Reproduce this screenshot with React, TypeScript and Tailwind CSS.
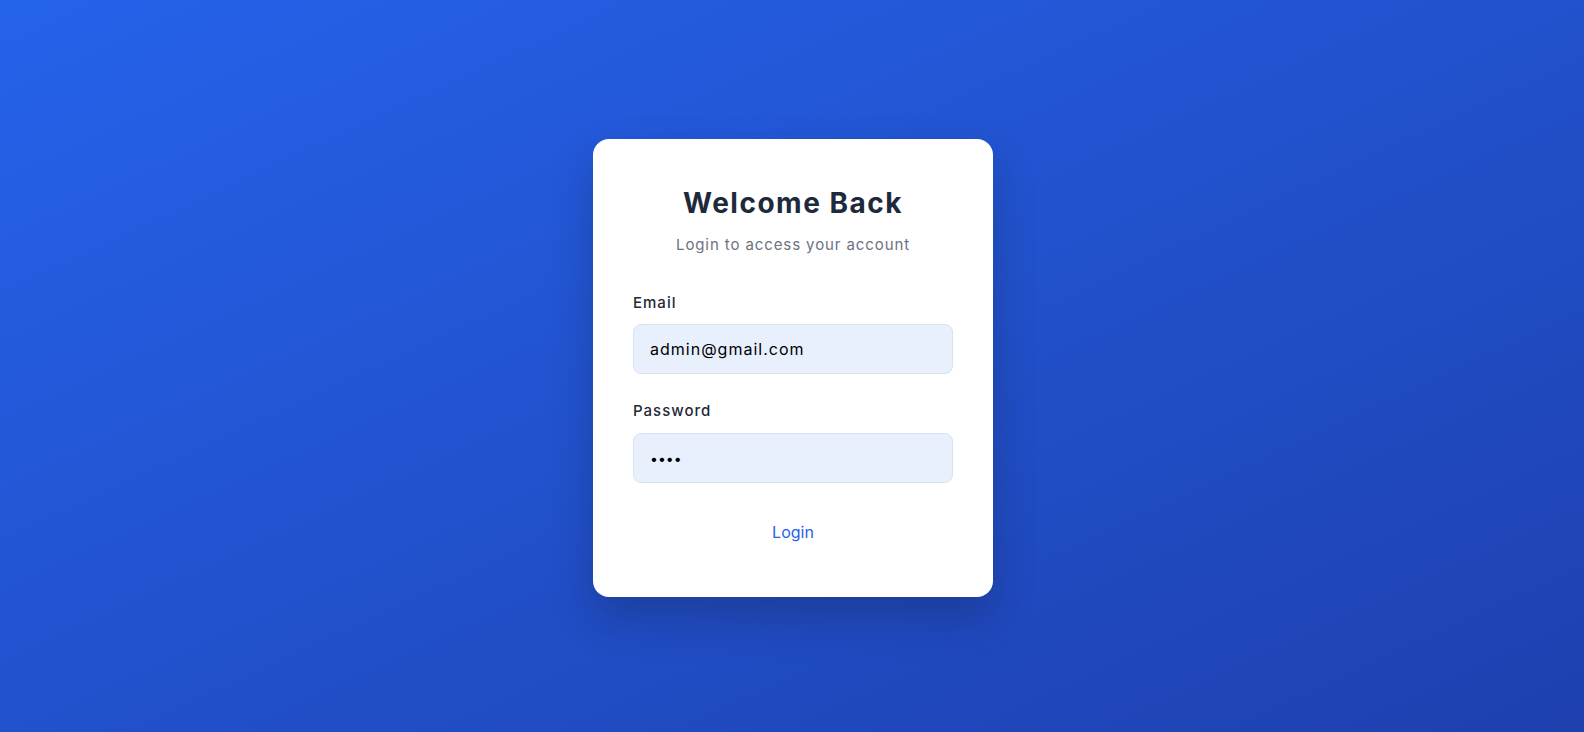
import React from "react";

export default function App() {
  return (
    <div
      className="w-full h-[732px] flex items-center justify-center bg-gradient-to-br from-[#2563eb] to-[#1e40af]"
      style={{ fontFamily: "Inter, 'Noto Sans', sans-serif" }}
    >
      <div className="mt-[4px] ml-[2px] w-[400px] bg-white rounded-[16px] px-[40px] pt-[40px] pb-[41px] shadow-[0_20px_40px_rgba(15,23,42,0.25)]">
        <h1 className="text-center text-[28px] leading-[48px] font-bold tracking-[1.5px] text-[#1e293b]">Welcome Back</h1>
        <p className="mt-[6px] text-center text-[15px] leading-[24px] tracking-[0.9px] text-[#6b7280]">Login to access your account</p>
        <div className="mt-[35px]">
          <label className="block text-[15px] leading-[22px] font-medium tracking-[1px] text-[#1f2937]">Email</label>
          <div className="mt-[10px] h-[50px] rounded-[8px] border border-[#d9e2f1] bg-[#e8f0fe] px-[16px] flex items-center text-[16px] tracking-[1px] text-black">
            admin@gmail.com
          </div>
        </div>
        <div className="mt-[26px]">
          <label className="block text-[15px] leading-[22px] font-medium tracking-[1px] text-[#1f2937]">Password</label>
          <div className="mt-[11px] h-[50px] rounded-[8px] border border-[#d9e2f1] bg-[#e8f0fe] px-[16px] flex items-center text-[14px] text-black">
            ••••
          </div>
        </div>
        <button className="mt-[25px] w-full h-[48px] flex items-center justify-center text-[16px] text-[#2563eb] bg-transparent">
          Login
        </button>
      </div>
    </div>
  );
}
